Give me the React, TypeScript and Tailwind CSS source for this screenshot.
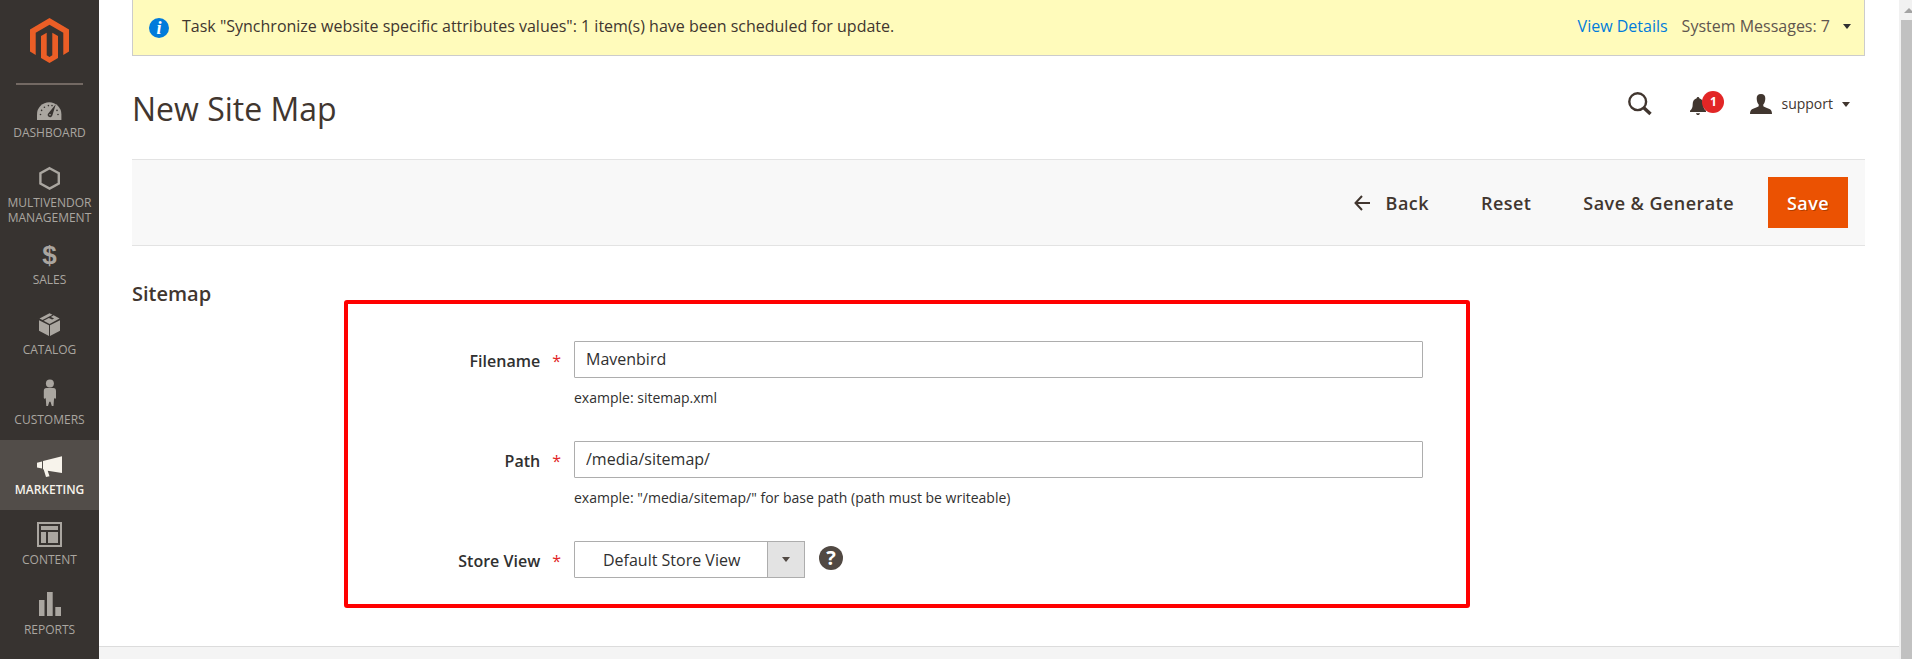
import { useState } from 'react';
import type { ReactNode } from 'react';
import clsx from 'clsx';

const Caret = ({ className }: { className?: string }) => (
  <svg className={clsx('w-2 h-[5px] shrink-0', className)} viewBox="0 0 8 5" fill="currentColor" aria-hidden="true">
    <path d="M0 0h8L4 5z" />
  </svg>
);

const Icon = ({ children }: { children: ReactNode }) => (
  <svg className="w-[35px] h-[34px]" viewBox="0 0 35 34" fill="currentColor" aria-hidden="true">
    {children}
  </svg>
);

const menu = [
  {
    label: 'Dashboard',
    icon: (
      <Icon>
        <path d="M5 29v-5.500a12.200 12.200 0 0 1 24.400 0V29z" />
        <path d="M23.800 13.300l-3.400 11a2.400 2.400 0 1 1-3.800-2.400z" fill="#373330" />
        <circle cx="18" cy="23.800" r="0.800" />
        <g fill="#373330">
          <circle cx="8.500" cy="23.500" r="0.800" />
          <circle cx="9.600" cy="19.400" r="0.800" />
          <circle cx="12.400" cy="16.200" r="0.800" />
          <circle cx="16.400" cy="14.600" r="0.800" />
          <circle cx="20" cy="14.600" r="0.800" />
          <circle cx="25" cy="19.400" r="0.800" />
          <circle cx="26" cy="23.500" r="0.800" />
        </g>
      </Icon>
    ),
  },
  {
    label: 'Multivendor Management',
    icon: (
      <Icon>
        <path d="M17.600 7.200l9.200 5v10.400l-9.200 5-9.200-5V12.200z" fill="none" stroke="currentColor" strokeWidth="2.400" />
      </Icon>
    ),
  },
  {
    label: 'Sales',
    icon: (
      <span className="h-[34px] font-['Liberation_Sans',sans-serif] text-[26px] leading-[34px] font-bold" aria-hidden="true">
        $
      </span>
    ),
  },
  {
    label: 'Catalog',
    icon: (
      <Icon>
        <path d="M7 12.200l10 5V28L7 22.800z" />
        <path d="M28 12.200l-10 5V28l10-5.200z" />
        <path d="M17.500 5.200l3 1.500-10 5.200-3-1.300z" />
        <path d="M21.600 7.300l6 3.200-10 5.400-6-3.200 5.300-2.600 3.200 1.500 2-1-3.200-1.600z" />
      </Icon>
    ),
  },
  {
    label: 'Customers',
    icon: (
      <Icon>
        <circle cx="17.900" cy="5.500" r="4" />
        <path d="M14.500 10h6.800c1.900 0 2.700 1.200 2.700 3v6.700c0 1.200-1.600 1.300-1.900 0l-.6 8.300h-1.700l-1.300-4.200h-1.200L16 28h-1.700l-.6-8.300c-.3 1.300-1.900 1.200-1.900 0V13c0-1.800.8-3 2.700-3z" />
      </Icon>
    ),
  },
  {
    label: 'Marketing',
    active: true,
    icon: (
      <Icon>
        <path d="M11 13.100L30 8.300v16.800l-14.300-2.400 1.800 5.500-3.500.9-2.300-7.500-.7-.3z" />
        <path d="M5 14.700l5-1.300v7.200l-5-1.200z" />
      </Icon>
    ),
  },
  {
    label: 'Content',
    icon: (
      <Icon>
        <path d="M5 4h25v25H5zM7 6v21h21V6z" fillRule="evenodd" />
        <path d="M9 8h17v4H9zM9 14h5v11H9zM16 14h10v11H16z" />
      </Icon>
    ),
  },
  {
    label: 'Reports',
    icon: (
      <Icon>
        <path d="M7 12h5.500v16H7zM15 4h5.700v24H15zM23.300 19H29v9h-5.700z" />
      </Icon>
    ),
  },
];

const Sidebar = () => (
  <nav className="w-[99px] shrink-0 bg-[#373330]">
    <a href="#home" aria-label="Magento Admin" className="flex justify-center mx-4 pt-[18px] pb-5 border-b-2 border-[#736963]">
      <svg className="w-[39px] h-[45px]" viewBox="0 0 39 45" fill="#eb5e26" aria-hidden="true">
        <path d="M19.500 0L39 11.500v22L33.300 37V14.800L19.500 6.700 5.700 14.800V37L0 33.500v-22z" />
        <path d="M11 18l5.700-3.300v22.500l2.800 1.800 2.800-1.800V14.700L28 18v22l-8.500 5-8.500-5z" />
      </svg>
    </a>
    <ul className="-mt-[2px]">
      {menu.map(item => (
        <li key={item.label}>
          <a
            href={'#' + item.label.toLowerCase()}
            className={clsx(
              'flex flex-col items-center min-h-[70px] pt-2 pb-[5px] px-1 text-center text-xs leading-[15px] uppercase',
              item.active ? 'bg-[#524d49] text-[#f7f3eb] font-semibold' : 'text-[#aaa6a0]'
            )}
          >
            {item.icon}
            {item.label}
          </a>
        </li>
      ))}
    </ul>
  </nav>
);

const SystemMessages = () => (
  <div className="flex items-center h-14 pl-4 pr-[13px] border border-t-0 border-[#cccccc] bg-[#fffbbb] text-base">
    <span
      aria-hidden="true"
      className="flex items-center justify-center size-5 rounded-full bg-[#007bdb] text-white font-['Liberation_Serif',serif] text-lg leading-5 font-bold italic"
    >
      i
    </span>
    <p className="ml-[13px] pb-[3px] grow text-[#41362f]">
      Task "Synchronize website specific attributes values": 1 item(s) have been scheduled for update.
    </p>
    <a href="#details" className="pb-[3px] text-[#007bdb]">View Details</a>
    <button type="button" className="flex items-center ml-[14px] pb-[3px] text-[#5f564f]">
      System Messages: 7
      <Caret className="ml-[13px] text-[#303030]" />
    </button>
  </div>
);

const PageHeader = () => (
  <header className="flex items-start justify-between pt-[31px] pb-7">
    <h1 className="text-[32px] leading-[44px] text-[#41362f]">New Site Map</h1>
    <div className="flex items-center h-[34px] pr-[15px] text-[#41362f]">
      <button type="button" aria-label="Search">
        <svg className="w-6 h-6" viewBox="0 0 24 24" fill="none" stroke="currentColor" aria-hidden="true">
          <circle cx="9.700" cy="9.700" r="8.400" strokeWidth="2.400" />
          <path d="M15.800 15.800l6.700 6.300" strokeWidth="3.400" />
        </svg>
      </button>
      <button type="button" aria-label="Notifications" className="relative ml-[38px] w-[34px] h-6">
        <svg className="w-4 h-6" viewBox="0 0 16 24" fill="currentColor" aria-hidden="true">
          <path d="M8 5c.9 0 1.300.6 1.300 1.300C12.300 7.200 13.300 9.500 13.300 12c0 3.500.7 5.200 2.700 6.700V20H0v-1.300C2 17.200 2.700 15.500 2.700 12c0-2.500 1-4.800 4-5.700C6.700 5.600 7.100 5 8 5zM6 21.300h4c-.2 1.200-.9 1.800-2 1.800s-1.800-.6-2-1.800z" />
        </svg>
        <span className="absolute right-0 -top-px size-[22px] rounded-full bg-[#e22626] text-white text-xs leading-[22px] font-bold">
          1
        </span>
      </button>
      <button type="button" className="flex items-center ml-[26px] text-sm">
        <svg className="w-[22px] h-5" viewBox="0 0 22 20" fill="currentColor" aria-hidden="true">
          <path d="M11 0c3 0 4.500 1.800 4.300 4.700-.1 2.700-.9 4.500-2 5.700v1.800c1.400 1.300 4.500 1.800 6.700 3 1.300.8 1.900 2.300 2 4.800H0c.1-2.500.7-4 2-4.800 2.200-1.200 5.300-1.700 6.700-3v-1.800c-1.100-1.200-1.900-3-2-5.700C6.500 1.800 8 0 11 0z" />
        </svg>
        <span className="ml-[9px] mr-[9px]">support</span>
        <Caret />
      </button>
    </div>
  </header>
);

const Toolbar = () => (
  <div className="flex items-center justify-end gap-4 h-[87px] pr-[17px] border-y border-[#e3e3e3] bg-[#f8f8f8] text-lg font-semibold tracking-wide text-[#41362f]">
    <button type="button" className="flex items-center px-[18px]">
      <svg className="w-4 h-4 mr-4" viewBox="0 0 16 16" fill="none" stroke="currentColor" strokeWidth="2" aria-hidden="true">
        <path d="M8 1L1.500 8 8 15M1.500 8H16" />
      </svg>
      Back
    </button>
    <button type="button" className="px-[18px]">Reset</button>
    <button type="button" className="px-[18px]">Save &amp; Generate</button>
    <button type="button" className="w-20 h-[51px] bg-[#eb5202] text-white [text-shadow:1px_1px_0_rgba(0,0,0,0.25)]">
      Save
    </button>
  </div>
);

interface FieldProps {
  id: string;
  label: string;
  note?: string;
  children: ReactNode;
}

const Field = ({ id, label, note, children }: FieldProps) => (
  <div className="flex items-start">
    <label htmlFor={id} className="flex justify-end w-[226px] pr-[13px] text-base leading-10 font-semibold text-[#303030]">
      {label}
      <span className="ml-3 font-normal text-[#e22626]">*</span>
    </label>
    <div className="grow">
      <div className="flex items-center h-[37px]">{children}</div>
      {note && <p className="mt-[10px] text-sm leading-5 text-[#303030]">{note}</p>}
    </div>
  </div>
);

const inputClass = 'w-full h-full px-[11px] pb-px border border-[#adadad] rounded-[1px] bg-white text-base text-[#303030]';

const SitemapForm = () => {
  const [filename, setFilename] = useState('Mavenbird');
  const [path, setPath] = useState('/media/sitemap/');

  return (
    <form className="flex items-start pt-[34px] pb-[38px]">
      <h2 className="w-[212px] shrink-0 text-xl leading-7 font-semibold text-[#41362f]">Sitemap</h2>
      <div className="flex flex-col gap-[33px] w-[65%] mt-5 pt-[37px] pb-[23px] pr-[43px] border-4 border-[#ff0000] rounded-[3px]">
        <Field id="filename" label="Filename" note="example: sitemap.xml">
          <input id="filename" type="text" value={filename} onChange={e => setFilename(e.target.value)} className={inputClass} />
        </Field>
        <Field id="path" label="Path" note={'example: "/media/sitemap/" for base path (path must be writeable)'}>
          <input id="path" type="text" value={path} onChange={e => setPath(e.target.value)} className={inputClass} />
        </Field>
        <Field id="store" label="Store View">
          <div className="relative w-[231px] h-full">
            <select id="store" className="w-full h-full pl-7 pr-10 border border-[#adadad] rounded-[1px] bg-white text-base text-[#303030] appearance-none">
              <option>Default Store View</option>
            </select>
            <span className="absolute inset-y-0 right-0 flex items-center justify-center w-[38px] border border-[#adadad] bg-[#e3e3e3] text-[#514943] pointer-events-none">
              <Caret />
            </span>
          </div>
          <button
            type="button"
            aria-label="Help"
            className="ml-[14px] mb-1 size-6 rounded-full bg-[#514943] text-white text-xl leading-6 font-bold"
          >
            ?
          </button>
        </Field>
      </div>
    </form>
  );
};

const ScrollBar = () => (
  <div aria-hidden="true" className="flex flex-col w-[13px] shrink-0 pl-[2px] bg-[#f1f1f1]">
    <div className="h-5 pt-2 pl-[3px] overflow-hidden">
      <svg className="w-[10px] h-[5px] max-w-none" viewBox="0 0 10 5" fill="#a3a3a3">
        <path d="M5 0l5 5H0z" />
      </svg>
    </div>
    <div className="grow bg-[#c1c1c1]" />
  </div>
);

export default function App() {
  return (
    <div className="flex min-h-screen bg-white font-['Open_Sans',sans-serif]">
      <Sidebar />
      <div className="flex flex-col grow min-w-0">
        <main className="pl-[33px] pr-[34px]">
          <SystemMessages />
          <PageHeader />
          <Toolbar />
          <SitemapForm />
        </main>
        <footer className="grow border-t border-[#dcdcdc] bg-[#f4f4f4]" />
      </div>
      <ScrollBar />
    </div>
  );
}
